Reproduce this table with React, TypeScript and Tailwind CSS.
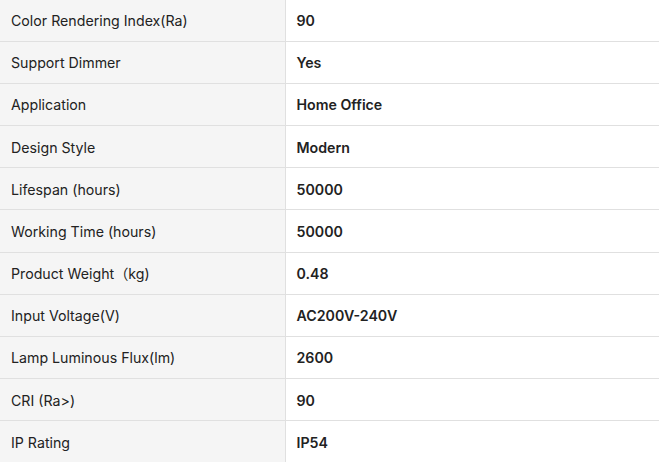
const specs: [string, string][] = [
  ["Color Rendering Index(Ra)", "90"],
  ["Support Dimmer", "Yes"],
  ["Application", "Home Office"],
  ["Design Style", "Modern"],
  ["Lifespan (hours)", "50000"],
  ["Working Time (hours)", "50000"],
  ["Product Weight（kg)", "0.48"],
  ["Input Voltage(V)", "AC200V-240V"],
  ["Lamp Luminous Flux(lm)", "2600"],
  ["CRI (Ra>)", "90"],
  ["IP Rating", "IP54"],
]

export default function App() {
  return (
    <div className="h-[462px] w-[659px] overflow-hidden bg-white font-['Inter','Noto_Sans_CJK_SC',sans-serif] text-[14.2px] text-[#222]">
      <table className="-mt-px w-full border-collapse">
        <tbody>
          {specs.map(([label, value]) => (
            <tr key={label} className="border-b border-[#e0e0e0]">
              <td className="h-[42.2px] w-[285px] border-r border-[#e0e0e0] bg-[#f5f5f5] px-[11px] pt-px align-middle">
                {label}
              </td>
              <td className="h-[42.2px] px-[11px] pt-px align-middle font-semibold">{value}</td>
            </tr>
          ))}
        </tbody>
      </table>
    </div>
  )
}
